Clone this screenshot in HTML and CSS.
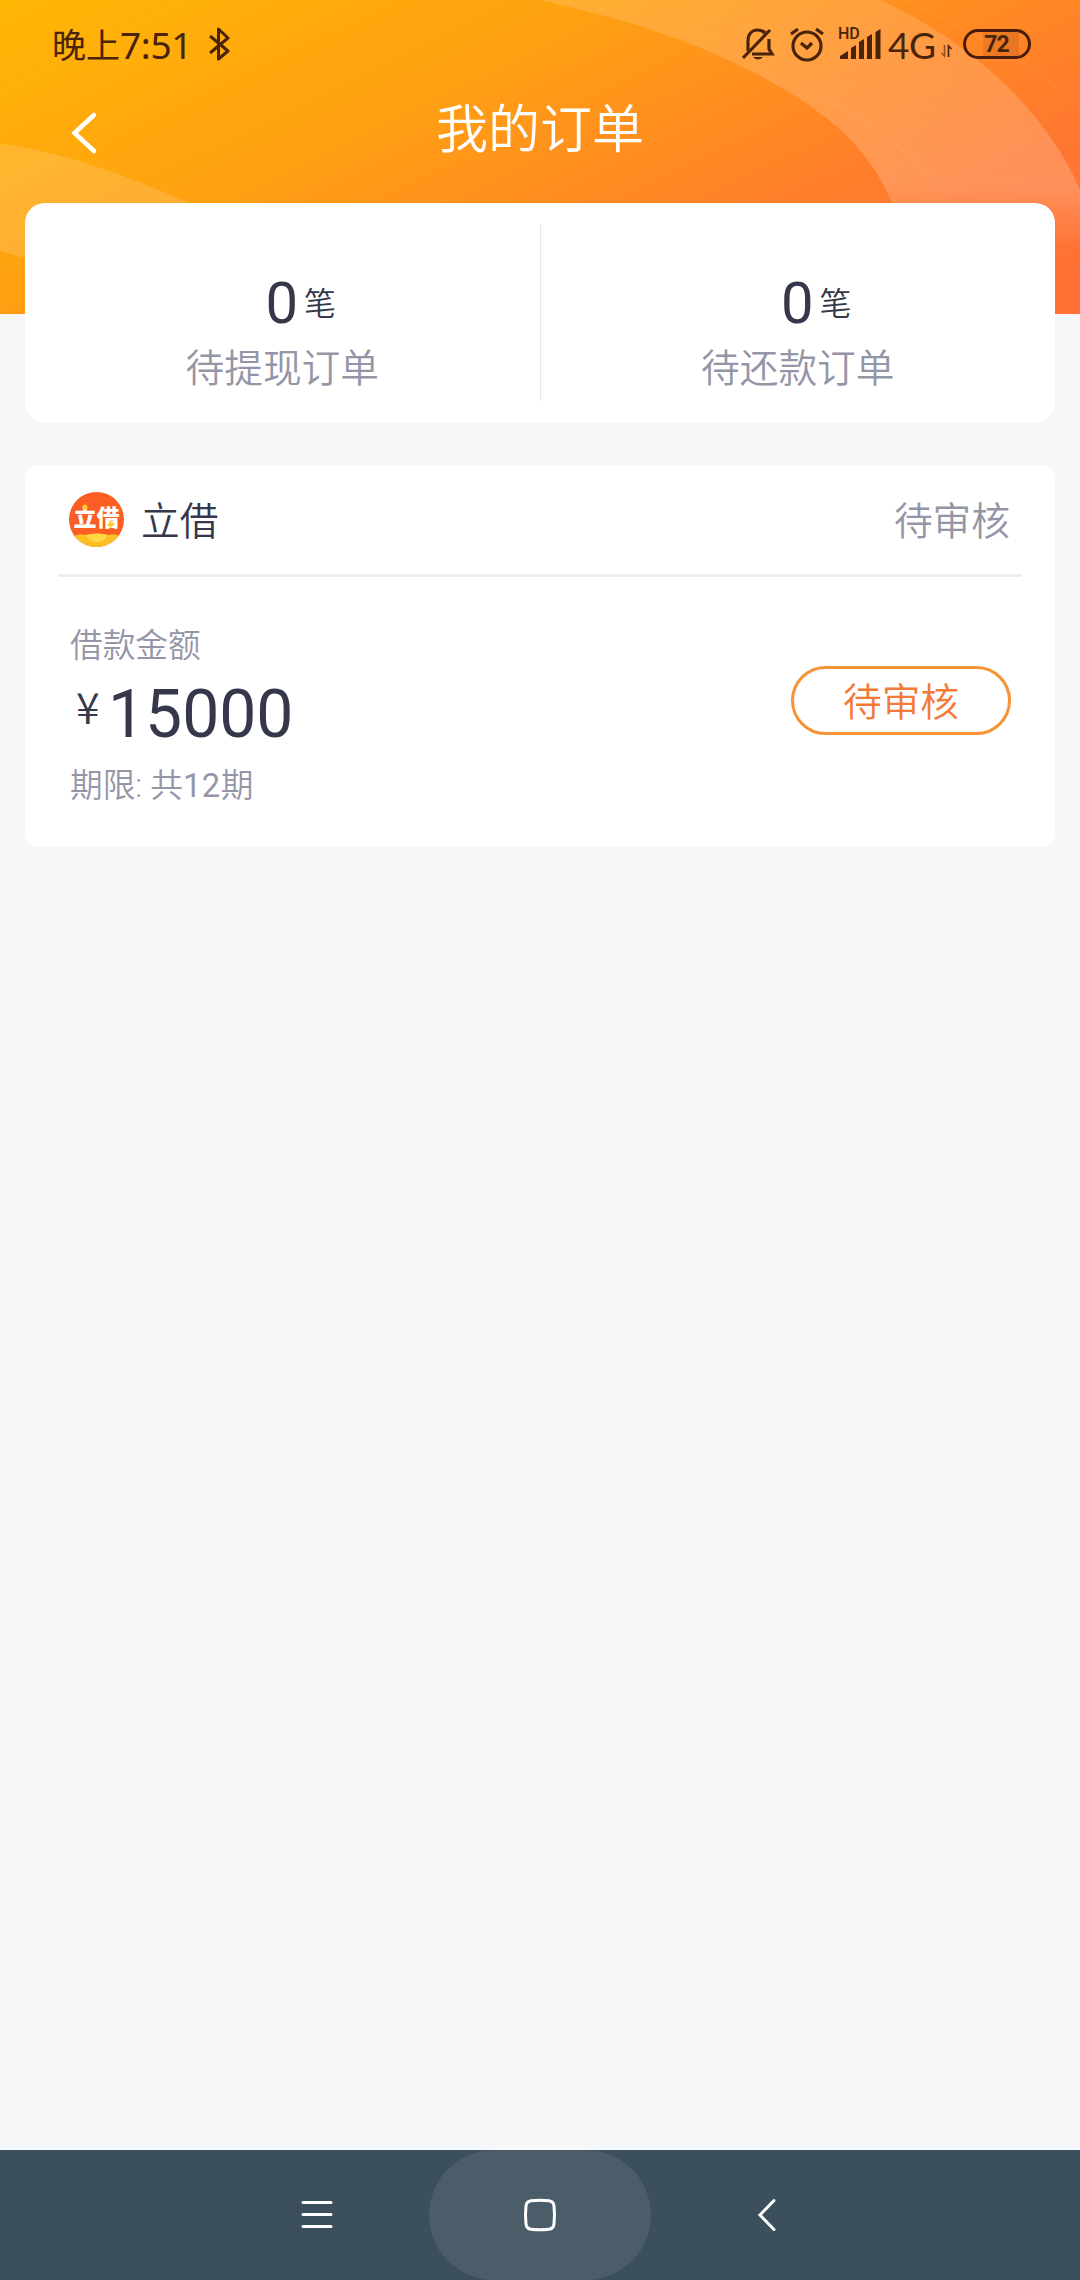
FILE: index.html
```html
<!DOCTYPE html>
<html lang="zh-CN">
<head>
    <meta charset="UTF-8">
    <meta name="viewport" content="width=device-width, initial-scale=1.0">
    <title>我的订单</title>
    <link rel="stylesheet" href="styles.css">
</head>
<body>
    <header class="header">
        <svg class="header-bg" viewBox="0 0 1080 314">
            <defs>
                <linearGradient id="fade" x1="0" y1="0" x2="0" y2="1">
                    <stop offset="0" stop-color="#fff" stop-opacity=".14"/>
                    <stop offset=".75" stop-color="#fff" stop-opacity=".2"/>
                    <stop offset="1" stop-color="#fff" stop-opacity="0"/>
                </linearGradient>
            </defs>
            <path fill="url(#fade)" d="M540 0C640 22 700 45 753 72C830 112 870 150 891 201L905 250H1080V190C1050 120 985 50 881 0Z"/>
            <path fill="#fff" fill-opacity=".14" d="M0 144C60 151 120 173 190 203L190 270L25 258L0 251Z"/>
            <path fill="none" stroke="#fff" stroke-opacity=".05" stroke-width="2" d="M905 0C980 35 1040 68 1080 107M820 97C880 125 920 160 950 198"/>
        </svg>

        <div class="status-bar">
            <div class="status-left">
                <span class="status-cjk">晚上</span><span class="status-time">7:51</span>
                <svg class="bluetooth" width="22" height="36" viewBox="0 0 22 36">
                    <path d="M2 10L20 25L10.500 33V3L20 12L2 27"/>
                </svg>
            </div>
            <div class="status-right">
                <svg class="line-icon bell" width="34" height="34" viewBox="0 0 34 34">
                    <path d="M7 24V14C7 7 11 3 17 3C20 3 22 4 24 6M28 12V22L31 27H11"/>
                    <path d="M2 31L29 3"/>
                    <path d="M12 30H22Q17 35 12 30Z" class="solid"/>
                </svg>
                <svg class="line-icon alarm" width="36" height="36" viewBox="0 0 36 36">
                    <circle cx="18" cy="20" r="14"/>
                    <path d="M12 17L18 22L23 17M2 8L9 3M34 8L27 3"/>
                </svg>
                <div class="signal">
                    <span class="hd">HD</span>
                    <svg class="bars" width="41" height="30" viewBox="0 0 41 30">
                        <path d="M0 30V27L8 22V30ZM11 30V19L16 16V30ZM19 30V13L24 10V30ZM27 30V8L32 5V30ZM35.500 30V3L40.500 0V30Z"/>
                    </svg>
                </div>
                <span class="network">4G</span>
                <svg class="arrows" width="13" height="14" viewBox="0 0 13 14">
                    <path opacity=".6" d="M4.500 1V12L1.500 9"/>
                    <path d="M8.500 13V2L11.500 5"/>
                </svg>
                <span class="battery">72</span>
            </div>
        </div>

        <div class="title-bar">
            <svg class="back" width="28" height="44" viewBox="0 0 28 44">
                <path d="M24 4L4.500 22L24 40"/>
            </svg>
            <h1>我的订单</h1>
        </div>
    </header>

    <main class="content">
        <section class="stats">
            <div class="stat">
                <p class="stat-value">0<span>笔</span></p>
                <p class="stat-label">待提现订单</p>
            </div>
            <div class="stat">
                <p class="stat-value">0<span>笔</span></p>
                <p class="stat-label">待还款订单</p>
            </div>
        </section>

        <section class="order">
            <div class="order-head">
                <div class="logo">
                    <span>立借</span>
                    <svg class="gold" width="56" height="56" viewBox="0 0 56 56">
                        <path fill="#fbc024" d="M5 44Q10 41 17 43Q27 40 39 43Q46 41 51 44Q43 56 28 56Q13 56 5 44Z"/>
                        <path fill="#ffd844" d="M17 43Q28 40 39 43Q35 50 28 50Q21 50 17 43Z"/>
                        <circle cx="16" cy="15" r="2.500" fill="#ffc928"/>
                        <path fill="#ffc928" d="M43 27L38 34H41L40 38L46 31H42Z"/>
                    </svg>
                </div>
                <span class="order-name">立借</span>
                <span class="order-status">待审核</span>
            </div>
            <div class="order-body">
                <div class="order-info">
                    <p class="muted">借款金额</p>
                    <p class="amount"><span>¥</span>15000</p>
                    <p class="muted">期限: 共<span class="term">12</span>期</p>
                </div>
                <button class="btn">待审核</button>
            </div>
        </section>
    </main>

    <!-- 底部导航 -->
    <nav class="nav">
        <svg width="32" height="34" viewBox="0 0 32 34">
            <path d="M2 4.500H30M2 16.500H30M2 28.500H30"/>
        </svg>
        <div class="home">
            <svg width="34" height="34" viewBox="0 0 34 34">
                <path d="M8 2.800Q17 1.800 26 2.800Q30.500 3.300 31 8Q32 17 31 26Q30.500 30.700 26 31.200Q17 32.200 8 31.200Q3.500 30.700 3 26Q2 17 3 8Q3.500 3.300 8 2.800Z"/>
            </svg>
        </div>
        <svg class="nav-back" width="22" height="34" viewBox="0 0 22 34">
            <path d="M18 2.500L4 17L18 31.500"/>
        </svg>
    </nav>
</body>
</html>
```
FILE: styles.css
```css
* {
    box-sizing: border-box;
}
body {
    margin: 0;
    min-height: 2280px;
    display: flex;
    flex-direction: column;
    background-color: #f6f6f9;
    color: #35374a;
    font-family: Roboto, "Noto Sans CJK SC", sans-serif;
    font-weight: 350;
}
p, h1 {
    margin: 0;
    font-weight: inherit;
}
svg {
    display: block;
    flex: none;
}
.header {
    position: relative;
    height: 314px;
    background: linear-gradient(154deg, #ffb705 0%, #ffa012 36%, #ff8a22 58%, #ff7631 80%, #ff7036 100%);
}
.header-bg {
    position: absolute;
    top: 0;
    left: 0;
    width: 100%;
    height: 100%;
}

/* 状态栏 */
.status-bar {
    position: relative;
    display: flex;
    justify-content: space-between;
    height: 88px;
    padding: 0 49px 0 52px;
    color: #4a230b;
}
.status-left, .status-right {
    display: flex;
    align-items: center;
    height: 88px;
}
.status-cjk {
    margin-top: 4px;
    font-size: 34px;
    font-weight: 400;
    line-height: 44px;
}
.status-time {
    margin-top: 1px;
    font-family: "Noto Sans", sans-serif;
    font-size: 37px;
    font-weight: 400;
    line-height: 44px;
    letter-spacing: -.3px;
}
.bluetooth {
    margin-left: 16px;
    fill: none;
    stroke: #4a230b;
    stroke-width: 3;
    stroke-linejoin: round;
}
.line-icon {
    fill: none;
    stroke: #4a230b;
    stroke-width: 3.2;
}
.line-icon .solid {
    fill: #4a230b;
    stroke: none;
}
.alarm {
    margin-left: 14px;
}
.signal {
    position: relative;
    margin-left: 15px;
}
.bars {
    fill: #4a230b;
}
.hd {
    position: absolute;
    top: -3px;
    left: -2px;
    font-size: 16px;
    font-weight: 500;
    line-height: 16px;
}
.network {
    margin: 2px 0 0 7px;
    width: 48px;
    font-family: Lato, sans-serif;
    font-size: 37px;
    font-weight: 400;
    line-height: 44px;
    letter-spacing: -.5px;
}
.arrows {
    margin: 14px 10px 0 4px;
    fill: none;
    stroke: #4a230b;
    stroke-width: 1.6;
}
.battery {
    width: 68px;
    height: 30px;
    border: 3px solid #4a1d0b;
    border-radius: 15px;
    background: linear-gradient(90deg, transparent 28%, rgba(90, 30, 10, .1) 28%, rgba(90, 30, 10, .14) 85%, transparent 85%);
    font-size: 23px;
    font-weight: 700;
    line-height: 26px;
    letter-spacing: -1px;
    text-align: center;
    padding-right: 1px;
}

.title-bar {
    position: relative;
    display: grid;
    grid-template-columns: 100px 1fr 100px;
    height: 90px;
    color: #fff;
}
.back {
    margin: 23px 0 0 70px;
    fill: none;
    stroke: #fff;
    stroke-width: 4.5;
    stroke-linecap: round;
}
.title-bar h1 {
    padding-top: 3px;
    font-size: 52px;
    line-height: 80px;
    text-align: center;
}

.content {
    position: relative;
    flex: 1;
    margin-top: -111px;
    padding: 0 25px;
}
.stats {
    display: flex;
    height: 220px;
    padding: 22px 0;
    background-color: #fff;
    border-radius: 20px;
}
.stat {
    flex: 1;
    padding-top: 43px;
    text-align: center;
}
.stat:first-child {
    border-right: 1px solid #e6e6ea;
}
.stat-value {
    height: 73px;
    padding-left: 37px;
    font-size: 58px;
    font-weight: 400;
    line-height: 70px;
}
.stat-value span {
    margin-left: 6px;
    font-size: 32px;
    font-weight: 350;
    vertical-align: 8px;
}
.stat-label {
    color: #9595a8;
    font-size: 38.7px;
    line-height: 56px;
}

/* 订单卡片 */
.order {
    height: 382px;
    margin-top: 42px;
    background-color: #fff;
    border-radius: 14px;
}
.order-head {
    display: flex;
    align-items: center;
    height: 112px;
    margin: 0 33px;
    padding: 0 12px 0 11px;
    border-bottom: 3px solid #ededef;
}
.logo {
    position: relative;
    width: 55px;
    height: 55px;
    border-radius: 50%;
    overflow: hidden;
    background-color: #fb5d22;
    color: #fff;
    font-size: 23px;
    font-weight: 900;
    line-height: 53px;
    text-align: center;
}
.gold {
    position: absolute;
    top: 0;
    left: 0;
}
.order-name {
    margin: -3px 0 0 17px;
    font-size: 38.7px;
}
.order-status {
    margin: -3px 0 0 auto;
    color: #9595a8;
    font-size: 38.7px;
}
.order-body {
    display: flex;
    justify-content: space-between;
    padding: 45px 44px 0 45px;
}
.muted {
    color: #9595a8;
    font-size: 32.7px;
    line-height: 48px;
}
.term {
    font-weight: 400;
    letter-spacing: .5px;
}
.amount {
    height: 92px;
    font-size: 66px;
    font-weight: 400;
    line-height: 90px;
}
.amount span {
    display: inline-block;
    width: 38px;
    padding-left: 6px;
    font-family: "Noto Sans CJK SC", sans-serif;
    font-size: 43px;
    font-weight: 350;
    line-height: 60px;
    vertical-align: 13px;
}
.btn {
    width: 220px;
    height: 69px;
    margin-top: 44px;
    padding: 5px 0 0;
    border: 3px solid #f59335;
    border-radius: 35px;
    background-color: #fff;
    color: #f47a38;
    font: inherit;
    font-size: 38.7px;
    line-height: 58px;
}

.nav {
    display: flex;
    align-items: center;
    height: 134px;
    padding-left: 301px;
    border-top: 4px solid #f5f9fc;
    background-color: #3c4f5d;
}
.nav svg {
    fill: none;
    stroke: #fff;
    stroke-width: 3;
    stroke-linecap: round;
}
.home {
    display: flex;
    align-items: center;
    justify-content: center;
    width: 222px;
    height: 130px;
    margin: 0 105px 0 96px;
    border-radius: 65px;
    background-color: #4c5d6a;
}
```
